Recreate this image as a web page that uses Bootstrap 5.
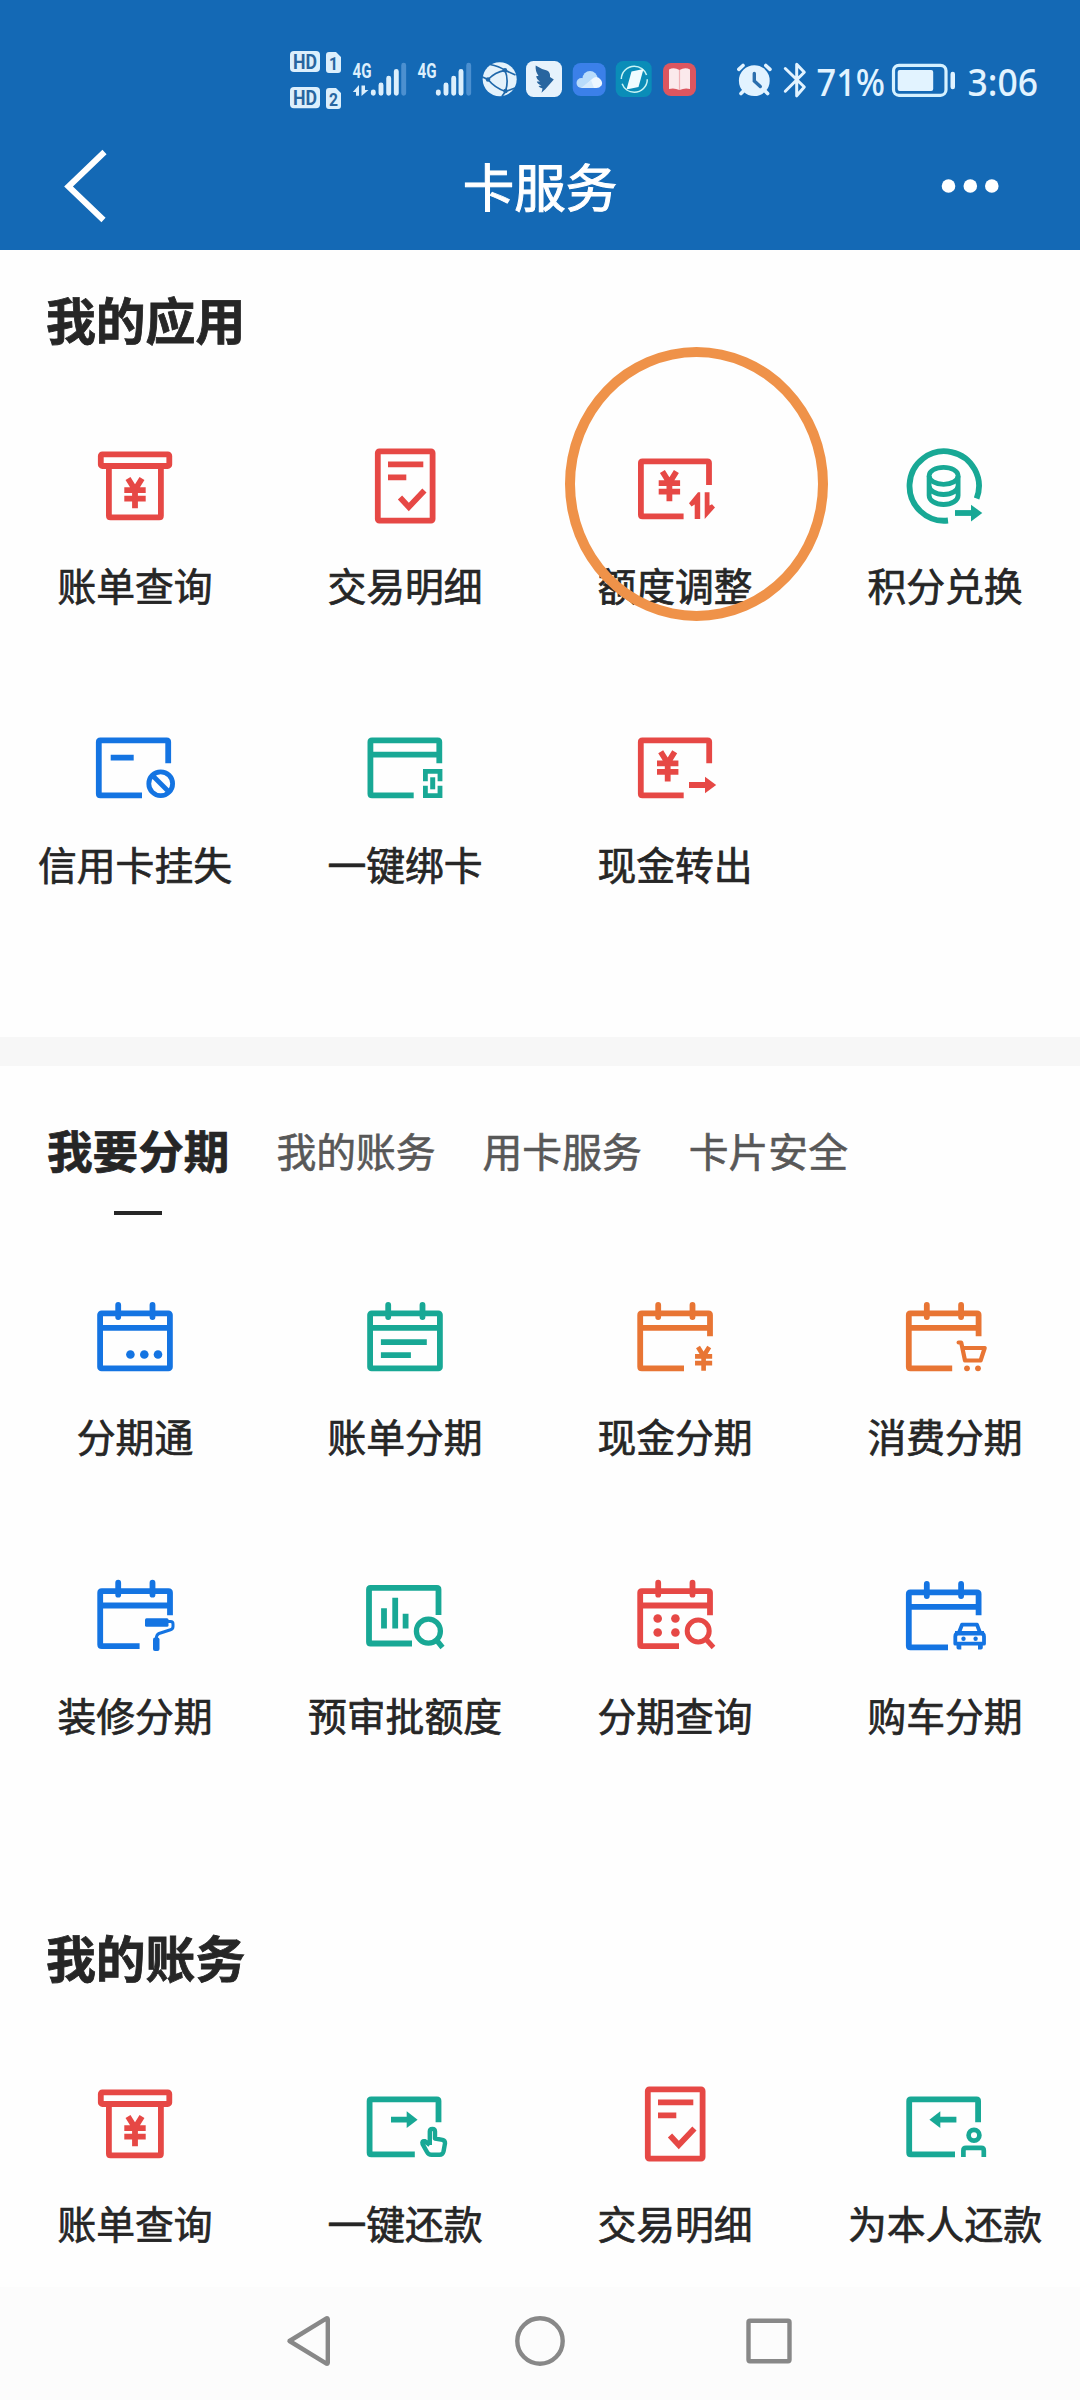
<!DOCTYPE html>
<html lang="zh-CN">
<head>
<meta charset="utf-8">
<meta name="viewport" content="width=device-width, initial-scale=1">
<title>卡服务</title>
<link rel="stylesheet" href="https://cdn.jsdelivr.net/npm/bootstrap@5.3.0/dist/css/bootstrap.min.css">
<style>
  body { background: #fefefe; color: #262626; font-family: "Noto Sans CJK SC", sans-serif; }
  .phone { width: 1080px; height: 2400px; overflow: hidden; }
  .app-head { height: 250px; background: #1469b5; color: #fff; }
  .status { height: 120px; padding: 40px 0 0 280px; }
  .status svg { height: 75px; overflow: visible; flex-shrink: 0; }
  .status text { font-family: Roboto, sans-serif; }
  .status .big { font-family: "Noto Sans", sans-serif; font-size: 38px; font-weight: 500; fill: #e2f3ff; }
  .title-row { height: 130px; padding: 0 75px 0 60px; }
  .back-arrow { margin-right: 30px; }
  .app-title { font-size: 51.5px; line-height: 60px; font-weight: 400; -webkit-text-stroke: 1px #fff; }
  .content { height: 2037px; overflow: hidden; }
  .sec-title { font-size: 49.8px; line-height: 50px; font-weight: 700; padding-left: 46px; -webkit-text-stroke: .8px #262626; }
  .sec-first { padding-top: 43px; padding-bottom: 92px; }
  .sec-second { padding-top: 87px; padding-bottom: 92px; }
  .tile { height: 279px; }
  .tile svg { width: 100px; height: 100px; fill: none; stroke: currentColor; stroke-width: 5.8; overflow: visible; }
  .tile .solid { fill: currentColor; stroke: none; }
  .tile-label { margin-top: 28.5px; font-size: 38.8px; line-height: 40px; font-weight: 400; -webkit-text-stroke: .7px #262626; white-space: nowrap; }
  .c-red { color: #e64845; }
  .c-green { color: #18a895; }
  .c-blue { color: #1474e2; }
  .c-orange { color: #e87534; }
  .ring { left: 25px; top: -88px; width: 263px; height: 274px; border: 10.6px solid #ef9249; border-radius: 50%; }
  .band { height: 29px; background: #f7f7f7; margin-top: 44px; }
  .tabs { height: 220px; padding: 54px 0 0 47px; gap: 47px; }
  .tab-item { font-size: 39.8px; line-height: 60px; color: #585858; -webkit-text-stroke: .6px #585858; }
  .tab-on { font-size: 45.6px; line-height: 58px; font-weight: 700; color: #262626; -webkit-text-stroke: .7px #262626; }
  .tab-on i { width: 48px; height: 4px; background: #262626; margin-top: 33px; }
  .sysbar { height: 113px; background: #fcfcfc; padding: 25px 286px 0 285px; }
  .sysbar svg { width: 54px; height: 58px; fill: none; stroke: #888; stroke-width: 4.4; stroke-linejoin: round; }
</style>
<script src="https://cdn.jsdelivr.net/npm/bootstrap@5.3.0/dist/js/bootstrap.bundle.min.js"></script>
</head>
<body>
<svg width="0" height="0" class="position-absolute">
  <defs>
    <symbol id="yen" viewBox="-12 0 24 31" overflow="visible">
      <path d="M-7 1.2L0 12.5 7 1.2M0 12V31M-10.7 12.9H10.7M-10.7 21.4H10.7"/>
    </symbol>
    <symbol id="bill" viewBox="0 0 100 100">
      <rect x="15.8" y="19.4" width="68.5" height="11.6" rx="1.5"/>
      <path d="M23.9 33V80.7q0 1.6 1.6 1.6H74.3q1.6 0 1.6-1.6V33"/>
      <use href="#yen" x="38" y="42.3" width="24" height="31"/>
    </symbol>
    <symbol id="detail" viewBox="0 0 100 100">
      <rect x="22.8" y="16.4" width="54.8" height="69.2" rx="1.5"/>
      <path d="M33 29.4H68.3M33 42.3H51.3M45 62.5L53.8 72 69.4 55.6"/>
    </symbol>
    <symbol id="calTop" viewBox="0 0 100 100">
      <path d="M33.2 19V31M67.5 19V31" stroke-linecap="round"/><path d="M15 41.8H85"/>
    </symbol>
  </defs>
</svg>
<div class="phone d-flex flex-column">
  <header class="app-head">
    <div class="status d-flex">
      <svg width="66" viewBox="280 40 66 75">
        <g fill="#dceffc"><rect x="290" y="51" width="30" height="21" rx="4"/><rect x="290" y="87" width="30" height="21.3" rx="4"/>
        <path d="M329 52h7l5 5v13q0 3-3 3h-9q-3 0-3-3V55q0-3 3-3zM329 88h7l5 5v13q0 3-3 3h-9q-3 0-3-3V91q0-3 3-3z"/></g>
        <g fill="#2765a0" font-weight="700" font-size="20"><text x="293" y="69" textLength="24" lengthAdjust="spacingAndGlyphs">HD</text><text x="293" y="105" textLength="24" lengthAdjust="spacingAndGlyphs">HD</text>
        <text x="329" y="69.5" font-size="18" textLength="9" lengthAdjust="spacingAndGlyphs">1</text><text x="329" y="105.5" font-size="18" textLength="9" lengthAdjust="spacingAndGlyphs">2</text></g>
      </svg>
      <svg width="134" viewBox="346 40 134 75" fill="#dceffc">
        <g font-weight="700" font-size="20"><text x="352.5" y="77.5" textLength="19" lengthAdjust="spacingAndGlyphs">4G</text><text x="417.5" y="77.5" textLength="19" lengthAdjust="spacingAndGlyphs">4G</text></g>
        <path d="M356 95.7V92h-3.200l6.200-7v10.700zM361.500 85.500h3.500V90h3.500l-7 6z"/>
        <g stroke="#dceffc" stroke-width="4.9" stroke-linecap="round">
          <path d="M373.3 92v1.2M381 85v8.2M388.7 78.2v15M396.3 71.4v21.800M438.3 92v1.2M446 85v8.2M453.7 78.2v15M461 71.4v21.800"/>
          <path d="M403.7 65.2v28M468.7 65.2v28" stroke="#4c90d0"/>
        </g>
      </svg>
      <svg width="42" viewBox="480 40 42 75">
        <circle cx="499.7" cy="79.3" r="17" fill="#e4f2fb"/>
        <g fill="none" stroke="#1f68aa" stroke-width="1.7"><path d="M490 64.5Q499 66 505 70.3L515.5 75M505 70.3Q495 72 488 79.5L482.5 77M488 79.5Q495 88 505.5 91.5L515 88M505 70.3Q509 80 505.5 91.5L502 96.2"/></g>
        <g fill="#1f68aa"><circle cx="505" cy="70.3" r="2.2"/><circle cx="488" cy="79.5" r="2.2"/><circle cx="505.5" cy="91" r="2.200"/></g>
      </svg>
      <svg width="46" viewBox="522 40 46 75">
        <rect x="526" y="61" width="36" height="36" rx="7.5" fill="#e6f2fc"/>
        <path d="M535.7 65.500Q541 69 547 70.500Q550.500 72 550 77L553.800 79.500 546.800 87.500 545.500 89 541.500 92.700 542.500 88.500Q539.500 87.800 538.500 86L541.500 85.500Q537.500 84 536.800 81.500L540 81.500Q536.300 79 536.300 76L538.500 76Q535 71 535.700 65.500z" fill="#28659f"/>
      </svg>
      <svg width="44" viewBox="568 40 44 75">
        <rect x="572.7" y="63" width="33" height="33" rx="8" fill="#3b80e9"/>
        <g fill="#b9dcfb"><circle cx="581.5" cy="83" r="5"/><circle cx="590" cy="78.5" r="7.5"/></g>
        <path d="M583 88l9-9q5-4.500 9 1 2 3 .4 5.500Q599.500 88 596.500 88z" fill="#eef7ff"/><path d="M581 88l10-8 3 8z" fill="#d7ebfd"/>
      </svg>
      <svg width="46" viewBox="612 40 46 75">
        <rect x="615.7" y="61" width="36" height="36" rx="7.5" fill="#0a8db8"/>
        <circle cx="634.3" cy="79.3" r="13" fill="none" stroke="#c8f4f5" stroke-width="1.5" stroke-dasharray="36 4.8"/>
        <path d="M631.500 71.500l12-2.500-5 18-12 2.500z" fill="#effcff"/>
      </svg>
      <svg width="72" viewBox="658 40 72 75">
        <rect x="663" y="63" width="33" height="33" rx="8" fill="#dc5660"/>
        <path d="M669 69.500q5-2.500 10.500.5 5.500-3 10.500-.5V89q-5-1.500-10.500 1Q674 87.500 669 89z" fill="#fbe9ec"/><path d="M679.500 70v20" stroke="#efb1b7" stroke-width="1.2"/>
      </svg>
      <svg width="84" viewBox="730 40 84 75" fill="none" stroke="#e2f3ff">
        <circle cx="754.3" cy="80.7" r="15.4" fill="#e2f3ff" stroke="none"/>
        <path d="M738.800 69.300l4.200-3.800M770 69.300l-4.200-3.800M741 93.500l3-3M767.600 93.500l-3-3" stroke-width="3.6" stroke-linecap="round"/>
        <path d="M754.300 73.500V81l6 5.500" stroke="#2b6fae" stroke-width="3.4" stroke-linecap="round"/>
        <path d="M785.300 68.500l19 18.500-7.600 8.800V64.200l7.600 8-19 19" stroke-width="3" stroke-linecap="round" stroke-linejoin="round"/>
      </svg>
      <svg width="74" viewBox="814 40 74 75"><text class="big" x="816.5" y="95.6" textLength="68.5" lengthAdjust="spacingAndGlyphs">71%</text></svg>
      <svg width="72" viewBox="888 40 72 75" fill="#e2f3ff">
        <rect x="893.5" y="65.3" width="52.5" height="30" rx="5.5" fill="none" stroke="#d5f1ff" stroke-width="3.2"/>
        <rect x="897.7" y="70" width="35.5" height="21" rx="2"/><rect x="950.5" y="71.7" width="4.5" height="17.6" rx="2.2"/>
      </svg>
      <svg width="90" viewBox="960 40 90 75"><text class="big" x="967.5" y="95.6" textLength="70.500" lengthAdjust="spacingAndGlyphs">3:06</text></svg>
    </div>
    <div class="title-row d-flex align-items-center justify-content-between">
      <svg class="back-arrow" width="60" height="80" viewBox="0 0 60 80" fill="none" stroke="#fff" stroke-width="6"><path d="M44.500 7L8.500 41.500 43.500 75"/></svg>
      <h1 class="app-title m-0">卡服务</h1>
      <svg width="75" height="20" viewBox="930 176 75 20" fill="#fff"><circle cx="948.500" cy="187" r="6.800"/><circle cx="970.300" cy="187" r="6.800"/><circle cx="991.800" cy="187" r="6.800"/></svg>
    </div>
  </header>

  <main class="content">
    <section>
      <h2 class="sec-title sec-first m-0">我的应用</h2>
      <div class="row row-cols-4 g-0 text-center">
        <div class="col tile"><svg class="c-red" viewBox="0 0 100 100"><use href="#bill"/></svg><div class="tile-label">账单查询</div></div>
        <div class="col tile"><svg class="c-red" viewBox="0 0 100 100"><use href="#detail"/></svg><div class="tile-label">交易明细</div></div>
        <div class="col tile position-relative">
          <svg class="c-red" viewBox="0 0 100 100"><path d="M84 50V28q0-1.600-1.600-1.600H17.500q-1.600 0-1.600 1.600V79.700q0 1.600 1.600 1.600H58.600"/><use href="#yen" x="32.400" y="35.300" width="24" height="31"/>
            <path class="solid" d="M75.200 57.300V84h-5.500V69.500l-3.200 2-2.500-3.300 9-10.900zM79.700 57.300h4.800V70.500l2.500-1.300 3 3.300L79.700 84z"/></svg>
          <div class="tile-label">额度调整</div>
          <div class="ring position-absolute"></div>
        </div>
        <div class="col tile"><svg class="c-green" viewBox="0 0 100 100"><path d="M81.600 63.500A34.700 34.700 0 1 0 53 85.500"/>
          <g stroke-width="4.800"><ellipse cx="48.600" cy="40.800" rx="14.500" ry="8.500"/><path d="M34.100 41v9.500c0 5 6.500 9 14.500 9s14.500-4 14.500-9V41M34.100 50v10.500c0 5 6.500 9 14.500 9s14.500-4 14.500-9V50"/></g>
          <path d="M60 78H77"/><path class="solid" d="M76 69.700L87.300 78 76 86.500z"/></svg><div class="tile-label">积分兑换</div></div>
        <div class="col tile"><svg class="c-blue" viewBox="0 0 100 100"><path d="M83.200 49.300V28q0-1.600-1.600-1.600H15.400q-1.600 0-1.600 1.600V79.700q0 1.600 1.600 1.600H57M25.700 43.700H48.700"/><g stroke-width="4.800"><circle cx="75.700" cy="69.700" r="11.900"/><path d="M67.500 61.500L84 78"/></g></svg><div class="tile-label">信用卡挂失</div></div>
        <div class="col tile"><svg class="c-green" viewBox="0 0 100 100"><path d="M84.300 49.300V28q0-1.600-1.600-1.600H17q-1.600 0-1.600 1.600V79.700q0 1.600 1.600 1.600H58.700M15.400 40.700H84.300"/><path d="M70.400 67.300V57.400H85V67.300M70.400 71.700V81.600H85V71.700" stroke-width="4.800"/><path class="solid" d="M75.200 63.300h5v12h-5z"/></svg><div class="tile-label">一键绑卡</div></div>
        <div class="col tile"><svg class="c-red" viewBox="0 0 100 100"><path d="M84.200 49.300V28q0-1.600-1.600-1.600H17.400q-1.600 0-1.600 1.600V79.700q0 1.600 1.600 1.600H58.700M64 71H81"/><use href="#yen" x="30.700" y="36.500" width="24" height="31"/><path class="solid" d="M80 62.700L91.200 71 80 79.300z"/></svg><div class="tile-label">现金转出</div></div>
      </div>
    </section>

    <div class="band"></div>

    <section>
      <nav class="tabs d-flex align-items-start">
        <div class="tab-item tab-on d-flex flex-column align-items-center">我要分期<i></i></div>
        <div class="tab-item">我的账务</div>
        <div class="tab-item">用卡服务</div>
        <div class="tab-item">卡片安全</div>
      </nav>
      <div class="row row-cols-4 g-0 text-center">
        <div class="col tile"><svg class="c-blue" viewBox="0 0 100 100"><use href="#calTop"/><rect x="15.100" y="27.300" width="69.800" height="55.100" rx="1.500"/><g class="solid"><circle cx="45.400" cy="68.500" r="4.300"/><circle cx="59.300" cy="68.500" r="4.300"/><circle cx="73" cy="68.500" r="4.300"/></g></svg><div class="tile-label">分期通</div></div>
        <div class="col tile"><svg class="c-green" viewBox="0 0 100 100"><use href="#calTop"/><rect x="15.100" y="27.300" width="69.800" height="55.100" rx="1.500"/><path d="M25.900 56.200H71.800M25.900 69.200H55.900"/></svg><div class="tile-label">账单分期</div></div>
        <div class="col tile"><svg class="c-orange" viewBox="0 0 100 100"><use href="#calTop"/><path d="M85 50.200V29q0-1.600-1.600-1.600H16.800q-1.600 0-1.600 1.600V80.800q0 1.600 1.600 1.600H59"/><use href="#yen" x="69" y="60" width="19.200" height="24.800"/></svg><div class="tile-label">现金分期</div></div>
        <div class="col tile"><svg class="c-orange" viewBox="0 0 100 100"><g transform="translate(-1.400)"><use href="#calTop"/><path d="M85 50.200V29q0-1.600-1.600-1.600H16.800q-1.600 0-1.600 1.600V80.800q0 1.600 1.600 1.600H58.600"/></g><path d="M63.600 56.500h2.600L70 74.500H85.600L89.700 62H67.500" stroke-width="4.200" stroke-linejoin="round" stroke-linecap="round"/><g class="solid"><circle cx="72" cy="82.300" r="2.900"/><circle cx="83" cy="82.300" r="2.900"/></g></svg><div class="tile-label">消费分期</div></div>
        <div class="col tile"><svg class="c-blue" viewBox="0 0 100 100"><g transform="translate(0 -1.300)"><use href="#calTop"/><path d="M85 51.500V29q0-1.600-1.600-1.600H16.800q-1.600 0-1.600 1.600V80.800q0 1.600 1.600 1.600H54.600"/></g><g class="solid"><rect x="60" y="53.300" width="23.500" height="8.500" rx="1.500"/><rect x="68" y="72.500" width="6.500" height="13.500" rx="2"/></g><path d="M82 56.500h3.500q2.500 0 2.500 2.500v2.500q0 2.500-2.500 3.300L74 68.500Q71.300 69.500 71.300 74" stroke-width="3"/></svg><div class="tile-label">装修分期</div></div>
        <div class="col tile"><svg class="c-green" viewBox="0 0 100 100"><path d="M83.500 50V24.500q0-1.600-1.600-1.600H15.600q-1.600 0-1.600 1.600V76.900q0 1.600 1.600 1.600H57M29 43.200V63.500M40.200 32.800V63.500M50.600 48.800V63.500"/><g stroke-width="5.300"><circle cx="73.400" cy="66.200" r="12"/><path d="M81.500 75L87.500 82.500"/></g></svg><div class="tile-label">预审批额度</div></div>
        <div class="col tile"><svg class="c-red" viewBox="0 0 100 100"><g transform="translate(0 -1.300)"><use href="#calTop"/><path d="M85 51.500V29q0-1.600-1.600-1.600H16.800q-1.600 0-1.600 1.600V80.800q0 1.600 1.600 1.600H54"/></g><g class="solid"><circle cx="32.700" cy="53.500" r="4.300"/><circle cx="50.400" cy="53.500" r="4.300"/><circle cx="32.700" cy="67.500" r="4.300"/><circle cx="50.400" cy="67.500" r="4.300"/></g><g stroke-width="5"><circle cx="73.200" cy="66" r="11"/><path d="M80.800 74L88.500 82.500"/></g></svg><div class="tile-label">分期查询</div></div>
        <div class="col tile"><svg class="c-blue" viewBox="0 0 100 100"><g transform="translate(-1.400 0)"><use href="#calTop"/><path d="M85 50.200V29q0-1.600-1.600-1.600H16.800q-1.600 0-1.600 1.600V80.800q0 1.600 1.600 1.600H54.400"/></g><g stroke-width="3.800" stroke-linejoin="round"><path d="M63.800 68L67 59.700H82L85.200 68"/><path d="M60.300 78.700V71.500q0-3 3-3H86q3 0 3 3v7.200z"/></g><path class="solid" d="M60 66h29v4H60zM61.500 79h4.800v5.500h-3q-1.800 0-1.800-2zM83 79h4.800v3.500q0 2-1.800 2h-3z"/><g class="solid"><circle cx="68.500" cy="73.700" r="2.200"/><circle cx="80.600" cy="73.700" r="2.200"/></g></svg><div class="tile-label">购车分期</div></div>
      </div>
    </section>

    <section>
      <h2 class="sec-title sec-second m-0">我的账务</h2>
      <div class="row row-cols-4 g-0 text-center">
        <div class="col tile"><svg class="c-red" viewBox="0 0 100 100"><use href="#bill"/></svg><div class="tile-label">账单查询</div></div>
        <div class="col tile"><svg class="c-green" viewBox="0 0 100 100"><path d="M83.500 49.300V28q0-1.600-1.600-1.600H16.200q-1.600 0-1.600 1.600V79.700q0 1.600 1.600 1.600H59.800M36 46.700H53"/><path class="solid" d="M51.700 38.300L62.600 46.700 51.700 55z"/><path d="M74.800 72V58.500q0-2.600 2.600-2.600t2.600 2.600V65.500l7.500 1.300q2.700.7 2.500 3.500L88.500 78.500q-.8 3.300-4 3.300H76.500Q73.500 81.800 72 79L67.600 71.200Q66.500 67.500 70 68.200L74.800 72" stroke-width="4.400" stroke-linejoin="round"/></svg><div class="tile-label">一键还款</div></div>
        <div class="col tile"><svg class="c-red" viewBox="0 0 100 100"><use href="#detail"/></svg><div class="tile-label">交易明细</div></div>
        <div class="col tile"><svg class="c-green" viewBox="0 0 100 100"><path d="M83.100 49.300V28q0-1.600-1.600-1.600H15.800q-1.600 0-1.600 1.600V79.700q0 1.600 1.600 1.600H60M44 46.700H61.400"/><path class="solid" d="M45.300 38.300L34.400 46.700 45.300 55z"/><g stroke-width="4.700"><circle cx="79" cy="62.300" r="5.400"/><path d="M68.400 84V77.500q0-2.600 2.600-2.600H86.200q2.600 0 2.600 2.600V84"/></g></svg><div class="tile-label">为本人还款</div></div>
      </div>
    </section>
  </main>

  <footer class="sysbar d-flex justify-content-between">
    <svg viewBox="285 2312 54 58"><path d="M289.500 2341L326.500 2318.300Q327.800 2318 327.800 2319.500V2362.500Q327.800 2364 326.500 2363.700Z"/></svg>
    <svg viewBox="513 2312 54 58"><circle cx="540" cy="2341" r="22.700"/></svg>
    <svg viewBox="740 2312 54 58"><rect x="748.500" y="2320.700" width="41" height="40.600" rx="1.500"/></svg>
  </footer>
</div>
</body>
</html>
